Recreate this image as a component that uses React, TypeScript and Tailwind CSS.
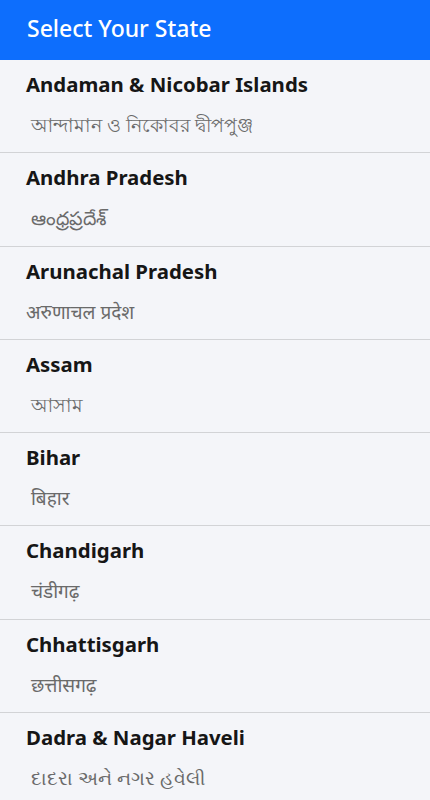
import React from "react";

const states: [string, string][] = [
  ["Andaman & Nicobar Islands", " আন্দামান ও নিকোবর দ্বীপপুঞ্জ"],
  ["Andhra Pradesh", " ఆంధ్రప్రదేశ్"],
  ["Arunachal Pradesh", "अरुणाचल प्रदेश"],
  ["Assam", " আসাম"],
  ["Bihar", " बिहार"],
  ["Chandigarh", " चंडीगढ़"],
  ["Chhattisgarh", " छत्तीसगढ़"],
  ["Dadra & Nagar Haveli", " દાદરા અને નગર હવેલી"],
];

export default function App() {
  return (
    <div
      className="w-[430px] h-[800px] overflow-hidden bg-[#f4f5f9]"
      style={{ fontFamily: '"Noto Sans", "Open Sans", sans-serif' }}
    >
      <div className="h-[60px] bg-[#0d6efd] flex items-center px-[27px] pb-[3px]">
        <span className="text-white text-[23px] font-medium">Select Your State</span>
      </div>
      {states.map(([en, local]) => (
        <div
          key={en}
          className="h-[93.3px] border-b border-[#d2d3d6] px-[26px] pt-[10px] flex flex-col"
        >
          <div className="text-[20.4px] leading-[28px] font-bold text-[#161616]">{en}</div>
          <div className="mt-[13px] text-[19px] leading-[28px] text-[#6a6a6a] whitespace-pre">{local}</div>
        </div>
      ))}
    </div>
  );
}
